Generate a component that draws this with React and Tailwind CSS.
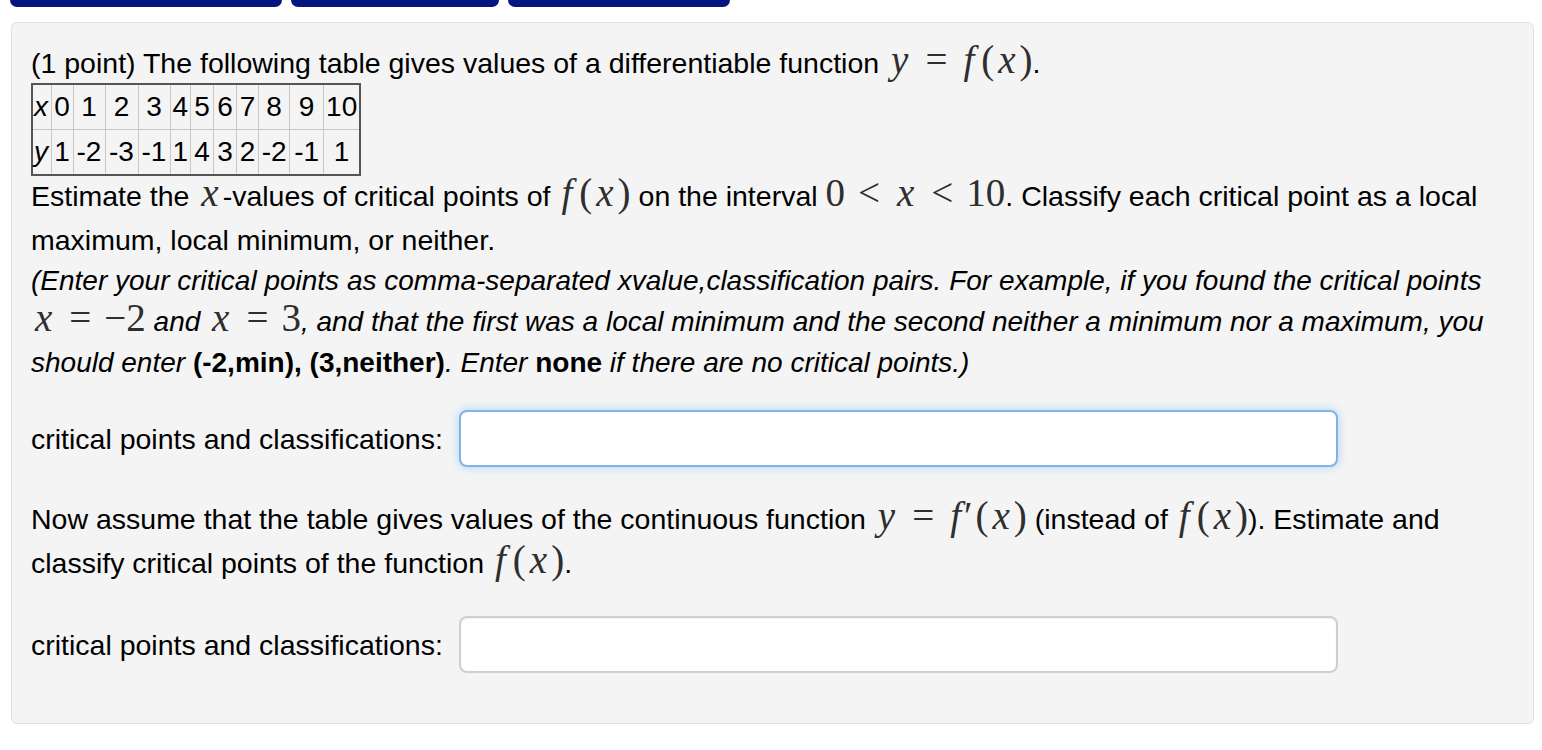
import React from "react";

const xs = ["0", "1", "2", "3", "4", "5", "6", "7", "8", "9", "10"];
const ys = ["1", "-2", "-3", "-1", "1", "4", "3", "2", "-2", "-1", "1"];
const colWidths = ["w-[22px]", "w-[32px]", "w-[33px]", "w-[32px]", "w-[19px]", "w-[23px]", "w-[23px]", "w-[22px]", "w-[31px]", "w-[34px]", "w-[36px]"];

// math typeset in a serif face, roughly the size MathJax gives it
const M = ({ children }) => (
  <span className="font-['Liberation_Serif',serif] text-[39px] leading-[20px] text-[#2e2e2e] not-italic">{children}</span>
);

const V = ({ children }) => <i className="mx-[4px] italic">{children}</i>;
const F = () => <i className="ml-[3px] mr-[7px] italic">f</i>;
const Rel = ({ children }) => <span className="mx-[13px]">{children}</span>;
const Fx = ({ prime }) => (
  <>
    <F />
    {prime && <span className="-ml-[4px] mr-[3px]">′</span>}(<V>x</V>)
  </>
);

function AnswerRow({ focused }) {
  return (
    <div className="flex items-center">
      <span className="whitespace-nowrap">critical points and classifications:</span>
      <div
        className={
          focused
            ? "ml-[16px] h-[57px] w-[879px] rounded-[8px] border-2 border-[#80b3e8] bg-white shadow-[0_0_10px_rgba(82,168,236,0.45)]"
            : "ml-[16px] h-[57px] w-[879px] rounded-[8px] border-2 border-[#cfcfcf] bg-white shadow-[inset_0_1px_2px_rgba(0,0,0,0.06)]"
        }
      />
    </div>
  );
}

export default function App() {
  return (
    <div className="min-h-[750px] bg-white font-['Liberation_Sans',Helvetica,Arial,sans-serif] text-[28.5px] leading-[40px] text-black">
      <div className="flex gap-[9px] pl-[10px]">
        <div className="h-[7px] w-[272px] rounded-b-[8px] bg-[#04157f]" />
        <div className="h-[7px] w-[208px] rounded-b-[8px] bg-[#04157f]" />
        <div className="h-[7px] w-[222px] rounded-b-[8px] bg-[#04157f]" />
      </div>

      <div className="ml-[11px] mt-[15px] w-[1523px] rounded-[6px] border border-[#e0e0e0] bg-[#f4f4f4] pb-[50px] pl-[19px] pt-[20px]">
        <div className="h-[41px] whitespace-nowrap">
          (1 point) The following table gives values of a differentiable function{" "}
          <M>
            <V>y</V>
            <Rel>=</Rel>
            <Fx />
          </M>
          .
        </div>

        <table className="-mt-[1px] border-collapse border-2 border-[#555] text-[28px] leading-[40px]">
          <tbody>
            <tr>
              <td className="w-[19px] border border-[#c8c8c8] px-[1px] py-[2px] italic">x</td>
              {xs.map((v, i) => (
                <td key={i} className={`${colWidths[i]} border border-[#c8c8c8] px-[2px] py-[2px] text-center`}>
                  {v}
                </td>
              ))}
            </tr>
            <tr>
              <td className="border border-[#c8c8c8] px-[1px] py-[2px] italic">y</td>
              {ys.map((v, i) => (
                <td key={i} className="border border-[#c8c8c8] px-[2px] py-[2px] text-center">
                  {v}
                </td>
              ))}
            </tr>
          </tbody>
        </table>

        <div className="h-[44px] whitespace-nowrap">
          Estimate the{" "}
          <M>
            <V>x</V>
          </M>
          -values of critical points of{" "}
          <M>
            <Fx />
          </M>{" "}
          on the interval{" "}
          <M>
            0<Rel>&lt;</Rel>
            <V>x</V>
            <Rel>&lt;</Rel>10
          </M>
          . Classify each critical point as a local
        </div>

        <div className="whitespace-nowrap">
          maximum, local minimum, or neither.
          <br />
          <i className="text-[28px]">
            (Enter your critical points as comma-separated xvalue,classification pairs. For example, if you found the critical points
            <br />
            <M>
              <V>x</V>
              <Rel>=</Rel>−2
            </M>{" "}
            and{" "}
            <M>
              <V>x</V>
              <Rel>=</Rel>3
            </M>
            , and that the first was a local minimum and the second neither a minimum nor a maximum, you
            <br />
            should enter <b className="not-italic font-bold">(-2,min), (3,neither)</b>. Enter{" "}
            <b className="not-italic font-bold">none</b> if there are no critical points.)
          </i>
        </div>

        <div className="mt-[27px]">
          <AnswerRow focused />
        </div>

        <div className="mt-[32px] h-[44px] whitespace-nowrap">
          Now assume that the table gives values of the continuous function{" "}
          <M>
            <V>y</V>
            <Rel>=</Rel>
            <Fx prime />
          </M>{" "}
          (instead of{" "}
          <M>
            <Fx />
          </M>
          ). Estimate and
        </div>
        <div className="h-[40px] whitespace-nowrap">
          classify critical points of the function{" "}
          <M>
            <Fx />
          </M>
          .
        </div>

        <div className="mt-[33px]">
          <AnswerRow />
        </div>
      </div>
    </div>
  );
}
